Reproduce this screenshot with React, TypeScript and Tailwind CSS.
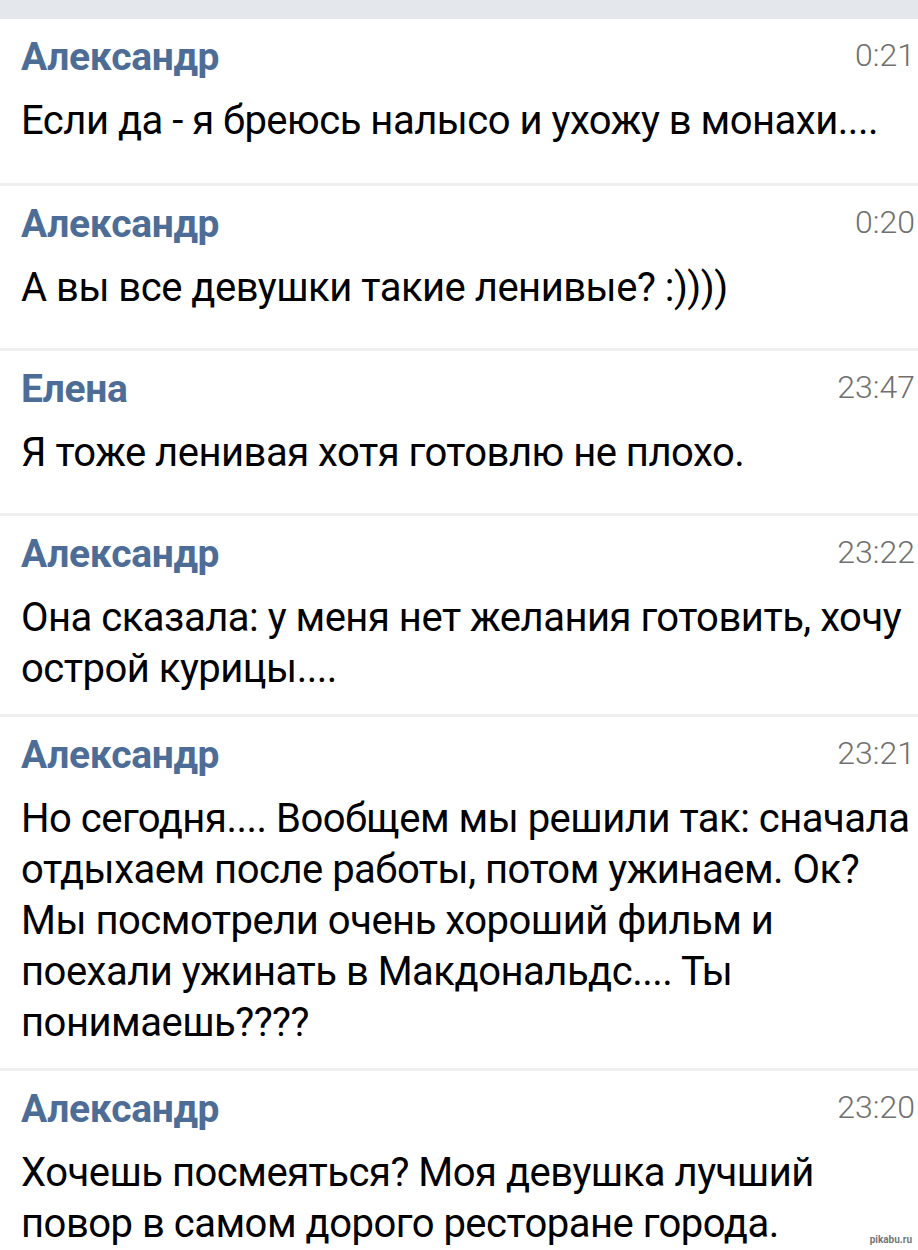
import React from "react";

type Msg = { name: string; time: string; text: string; minH: string };

const msgs: Msg[] = [
  { name: "Александр", time: "0:21", text: "Если да - я бреюсь налысо и ухожу в монахи....", minH: "min-h-[164px]" },
  { name: "Александр", time: "0:20", text: "А вы все девушки такие ленивые? :))))", minH: "min-h-[162px]" },
  { name: "Елена", time: "23:47", text: "Я тоже ленивая хотя готовлю не плохо.", minH: "min-h-[162px]" },
  { name: "Александр", time: "23:22", text: "Она сказала: у меня нет желания готовить, хочу\nострой курицы....", minH: "min-h-[162px]" },
  {
    name: "Александр",
    time: "23:21",
    text: "Но сегодня.... Вообщем мы решили так: сначала\nотдыхаем после работы, потом ужинаем. Ок?\nМы посмотрели очень хороший фильм и\nпоехали ужинать в Макдональдс.... Ты\nпонимаешь????",
    minH: "min-h-[162px]",
  },
  { name: "Александр", time: "23:20", text: "Хочешь посмеяться? Моя девушка лучший\nповор в самом дорого ресторане города.", minH: "min-h-[162px]" },
];

export default function App() {
  return (
    <div className="w-[918px] h-[1250px] overflow-hidden bg-white relative" style={{ fontFamily: "Roboto, 'Noto Sans', sans-serif" }}>
      <div className="h-[19px] bg-[#e4e7eb]" />
      {msgs.map((m, i) => (
        <div key={i}>
          {i > 0 && <div className="h-[3px] bg-[#efefef]" />}
          <div className={`pl-[21px] pr-[3px] pt-[16px] pb-[20px] ${m.minH}`}>
            <div className="flex justify-between items-start">
              <div className="text-[39px] leading-[44px] font-bold tracking-[-0.3px] text-[#4e6d96]">{m.name}</div>
              <div className="text-[32px] leading-[40px] font-light text-[#707070]">{m.time}</div>
            </div>
            <div className="mt-[16px] text-[40px] leading-[51px] tracking-[-0.5px] text-black whitespace-pre-line">{m.text}</div>
          </div>
        </div>
      ))}
      <div className="absolute right-[6px] bottom-[5px] text-[10px] leading-[10px] text-[#777] font-bold">pikabu.ru</div>
    </div>
  );
}
